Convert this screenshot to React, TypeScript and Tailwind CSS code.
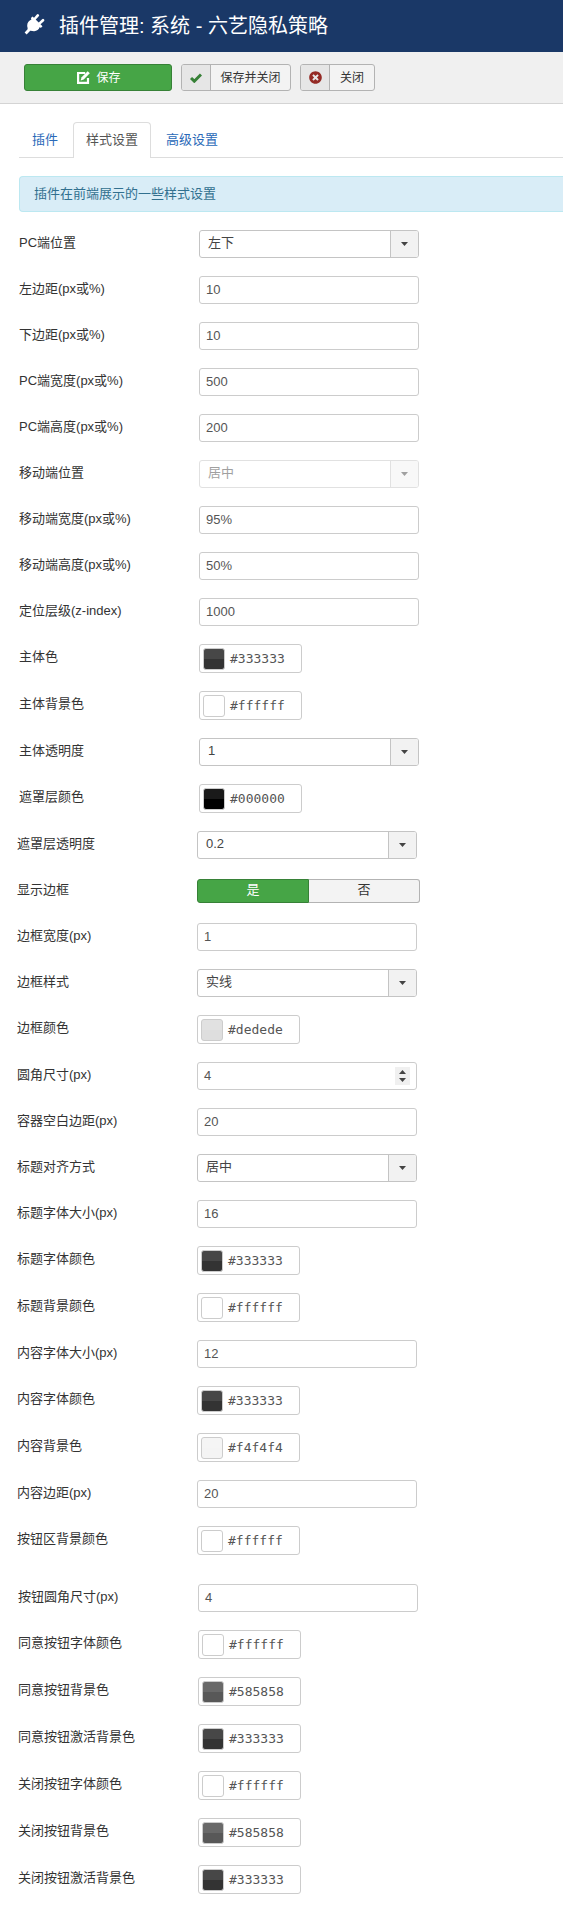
import clsx from 'clsx';
import { FaTimesCircle } from 'react-icons/fa';

type Field = {
  label: string;
  type: 'text' | 'select' | 'color' | 'number' | 'toggle';
  value: string;
  disabled?: boolean;
};

const layoutFields: Field[] = [
  { label: 'PC端位置', type: 'select', value: '左下' },
  { label: '左边距(px或%)', type: 'text', value: '10' },
  { label: '下边距(px或%)', type: 'text', value: '10' },
  { label: 'PC端宽度(px或%)', type: 'text', value: '500' },
  { label: 'PC端高度(px或%)', type: 'text', value: '200' },
  { label: '移动端位置', type: 'select', value: '居中', disabled: true },
  { label: '移动端宽度(px或%)', type: 'text', value: '95%' },
  { label: '移动端高度(px或%)', type: 'text', value: '50%' },
  { label: '定位层级(z-index)', type: 'text', value: '1000' },
  { label: '主体色', type: 'color', value: '#333333' },
  { label: '主体背景色', type: 'color', value: '#ffffff' },
  { label: '主体透明度', type: 'select', value: '1' },
  { label: '遮罩层颜色', type: 'color', value: '#000000' },
];

const contentFields: Field[] = [
  { label: '遮罩层透明度', type: 'select', value: '0.2' },
  { label: '显示边框', type: 'toggle', value: '是' },
  { label: '边框宽度(px)', type: 'text', value: '1' },
  { label: '边框样式', type: 'select', value: '实线' },
  { label: '边框颜色', type: 'color', value: '#dedede' },
  { label: '圆角尺寸(px)', type: 'number', value: '4' },
  { label: '容器空白边距(px)', type: 'text', value: '20' },
  { label: '标题对齐方式', type: 'select', value: '居中' },
  { label: '标题字体大小(px)', type: 'text', value: '16' },
  { label: '标题字体颜色', type: 'color', value: '#333333' },
  { label: '标题背景颜色', type: 'color', value: '#ffffff' },
  { label: '内容字体大小(px)', type: 'text', value: '12' },
  { label: '内容字体颜色', type: 'color', value: '#333333' },
  { label: '内容背景色', type: 'color', value: '#f4f4f4' },
  { label: '内容边距(px)', type: 'text', value: '20' },
  { label: '按钮区背景颜色', type: 'color', value: '#ffffff' },
];

const buttonFields: Field[] = [
  { label: '按钮圆角尺寸(px)', type: 'text', value: '4' },
  { label: '同意按钮字体颜色', type: 'color', value: '#ffffff' },
  { label: '同意按钮背景色', type: 'color', value: '#585858' },
  { label: '同意按钮激活背景色', type: 'color', value: '#333333' },
  { label: '关闭按钮字体颜色', type: 'color', value: '#ffffff' },
  { label: '关闭按钮背景色', type: 'color', value: '#585858' },
  { label: '关闭按钮激活背景色', type: 'color', value: '#333333' },
];

const Caret = ({ up }: { up?: boolean }) => (
  <svg
    viewBox="0 0 7 4"
    className={clsx('h-1 w-[7px] fill-[#444]', up && 'rotate-180')}
  >
    <path d="M0 0h7L3.5 4z" />
  </svg>
);

const PlugIcon = () => (
  <svg viewBox="0 0 21 21" className="size-[21px]" fill="white">
    <path
      d="M13.8 1.4L10.6 5M19 6.2l-3.6 3.4"
      stroke="white"
      strokeWidth="2.6"
      strokeLinecap="round"
    />
    <path d="M8.6 2.4l9.9 9.9-1.7 1.6-1-.8c-.9 2.6-3.2 4.2-5.8 4.1-1.5 0-2.9-.5-4-.3l-3.400 3.500-2-2 3-3.200c.3-1.500-.5-2.300-.4-4 .1-2.700 1.800-4.800 4.200-5.700L6.900 4.100z" />
  </svg>
);

const EditIcon = () => (
  <svg viewBox="0 0 13 13" className="size-[13px]" fill="none">
    <path d="M8.2 2H1.1v9.9H11V7" stroke="white" strokeWidth="2.2" />
    <path d="M10.7.2l2.1 2.1-6.1 6.1-3.1 1 1-3.1z" fill="white" />
  </svg>
);

const CheckIcon = () => (
  <svg viewBox="0 0 12 10" className="h-2.5 w-3" fill="none">
    <path d="M1 5l3.3 3.2L11 1.5" stroke="#378137" strokeWidth="3" />
  </svg>
);

const TextInput = ({ value }: { value: string }) => (
  <div className="flex h-7 w-[220px] items-center rounded-[3px] border border-[#ccc] px-1.5 text-[#555]">
    {value}
  </div>
);

const NumberInput = ({ value }: { value: string }) => (
  <div className="flex h-7 w-[220px] items-center justify-between rounded-[3px] border border-[#ccc] px-1.5 text-[#555]">
    <span>{value}</span>
    <span className="flex h-[18px] w-[15px] flex-col items-center justify-center gap-1 bg-[#f0f0f0]">
      <Caret up />
      <Caret />
    </span>
  </div>
);

const Select = ({ value, disabled }: { value: string; disabled?: boolean }) => (
  <div
    className={clsx(
      'flex h-7 w-[220px] overflow-hidden rounded-[3px] border border-[#c4c4c4] text-[#444]',
      disabled && 'opacity-50'
    )}
  >
    <span className="flex flex-1 items-center pb-0.5 pl-2">{value}</span>
    <span className="flex w-7 items-center justify-center border-l border-[#c4c4c4] bg-[#f2f2f2]">
      <Caret />
    </span>
  </div>
);

const ColorInput = ({ value }: { value: string }) => (
  <div className="flex h-[29px] w-[103px] items-center rounded-[3px] border border-[#ccc] pl-[3px] text-[#555]">
    <span
      className="flex size-[22px] rounded-[3px] border border-[#ccc]"
      style={{ backgroundColor: value }}
    >
      <span className="h-2.5 w-full rounded-t-[2px] bg-white/10" />
    </span>
    <span className="pl-[5px] font-['DejaVu_Sans_Mono',monospace]">
      {value}
    </span>
  </div>
);

const Toggle = () => (
  <div className="mt-0.5 flex h-6 w-[223px] text-center leading-5">
    <span className="w-28 rounded-l-[3px] border border-[#378137] bg-[#46a546] text-white">
      是
    </span>
    <span className="flex-1 rounded-r-[3px] border border-l-0 border-[#b3b3b3] bg-[#f3f3f3] text-[#333]">
      否
    </span>
  </div>
);

const Control = ({ field }: { field: Field }) => {
  switch (field.type) {
    case 'select':
      return <Select value={field.value} disabled={field.disabled} />;
    case 'color':
      return <ColorInput value={field.value} />;
    case 'number':
      return <NumberInput value={field.value} />;
    case 'toggle':
      return <Toggle />;
    default:
      return <TextInput value={field.value} />;
  }
};

const FieldGroup = ({
  fields,
  className,
}: {
  fields: Field[];
  className: string;
}) => (
  <div className={className}>
    {fields.map(field => (
      <div
        key={field.label}
        className={clsx('flex', field.type === 'color' ? 'h-[47px]' : 'h-[46px]')}
      >
        <div className="w-[180px] pt-1 leading-[18px] text-[#333]">
          {field.label}
        </div>
        <Control field={field} />
      </div>
    ))}
  </div>
);

const toolbarButton =
  'flex h-[27px] overflow-hidden rounded-[3px] border border-[#b3b3b3] bg-[#f3f3f3] text-xs text-[#333]';
const toolbarIcon =
  'flex h-full w-[29px] items-center justify-center border-r border-[#b3b3b3] bg-[#e6e6e6]';

export default function App() {
  return (
    <div className="h-[1932px] w-full overflow-hidden bg-white font-['Liberation_Sans','Noto_Sans_CJK_SC',sans-serif] text-[13px] leading-[18px]">
      <header className="flex h-[52px] items-center bg-[#1a3867] pl-6 text-white">
        <span className="pb-1">
          <PlugIcon />
        </span>
        <h1 className="pl-3.5 text-xl leading-6">
          插件管理: 系统 - 六艺隐私策略
        </h1>
      </header>

      <div className="flex h-[52px] gap-[9px] border-b border-[#d4d4d4] bg-[#f0f0f0] pt-3 pl-6">
        <button className="flex h-[27px] w-[148px] items-center justify-center gap-1.5 rounded-[3px] border border-[#378137] bg-[#46a546] pl-0.5 text-xs text-white">
          <EditIcon />
          保存
        </button>
        <button className={clsx(toolbarButton, 'w-[110px]')}>
          <span className={toolbarIcon}>
            <CheckIcon />
          </span>
          <span className="flex h-full flex-1 items-center justify-center">
            保存并关闭
          </span>
        </button>
        <button className={clsx(toolbarButton, 'w-[75px]')}>
          <span className={toolbarIcon}>
            <FaTimesCircle className="size-[13px] text-[#942a25]" />
          </span>
          <span className="flex h-full flex-1 items-center justify-center">
            关闭
          </span>
        </button>
      </div>

      <nav className="mt-[18px] ml-[19px] flex h-9 border-b border-[#ddd] text-[#2a69b8]">
        <a className="w-[54px] pt-[9px] pl-[13px]">插件</a>
        <a className="-mb-px h-9 w-[78px] rounded-t-[4px] border border-b-0 border-[#ddd] bg-white pt-2 text-center text-[#555]">
          样式设置
        </a>
        <a className="pt-[9px] pl-[15px]">高级设置</a>
      </nav>

      <div className="mt-[18px] ml-[19px] h-9 rounded-l-[4px] border border-r-0 border-[#bce8f1] bg-[#d9edf7] pt-2 pl-3.5 text-[#31708f]">
        插件在前端展示的一些样式设置
      </div>

      <FieldGroup fields={layoutFields} className="mt-[18px] pl-[19px]" />
      <FieldGroup fields={contentFields} className="pl-[17px]" />
      <FieldGroup fields={buttonFields} className="mt-[11px] pl-[18px]" />
    </div>
  );
}
